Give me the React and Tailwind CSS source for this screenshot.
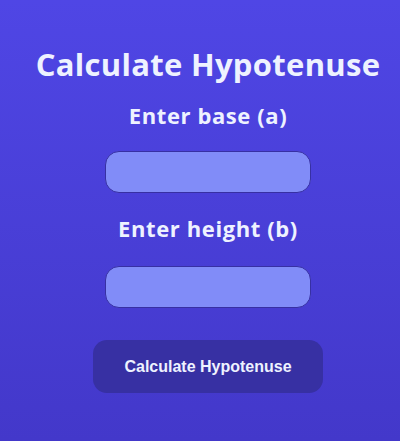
import React, { useState } from 'react';

const App = () => {
    const [base, setBase] = useState('');
    const [height, setHeight] = useState('');

    return (
        <div className="min-h-[441px] w-full bg-linear-to-b from-[#4f46e5] to-[#4338ca] text-[#eef2ff] flex flex-col items-center pl-4 pt-[44px] font-['Open_Sans',sans-serif]">
            <h1 className="text-[31px] leading-[40px] font-bold tracking-[0.3px]">Calculate Hypotenuse</h1>

            <label className="mt-[17px] text-[22px] leading-[28px] font-bold tracking-[0.6px]">Enter base (a)</label>
            <input
                value={base}
                onChange={(e) => setBase(e.target.value)}
                className="mt-[22px] w-[206px] h-[42px] rounded-[14px] bg-[#818cf8] border border-[#3730a3] outline-none px-3"
            />

            <label className="mt-[21px] text-[22px] leading-[28px] font-bold tracking-[0.6px]">Enter height (b)</label>
            <input
                value={height}
                onChange={(e) => setHeight(e.target.value)}
                className="mt-[24px] w-[206px] h-[42px] rounded-[14px] bg-[#818cf8] border border-[#3730a3] outline-none px-3"
            />

            <button className="mt-[32px] w-[230px] h-[53px] rounded-[14px] bg-[#3730a3] text-base font-bold font-['Liberation_Sans',sans-serif]">
                Calculate Hypotenuse
            </button>
        </div>
    );
};

export default App;
